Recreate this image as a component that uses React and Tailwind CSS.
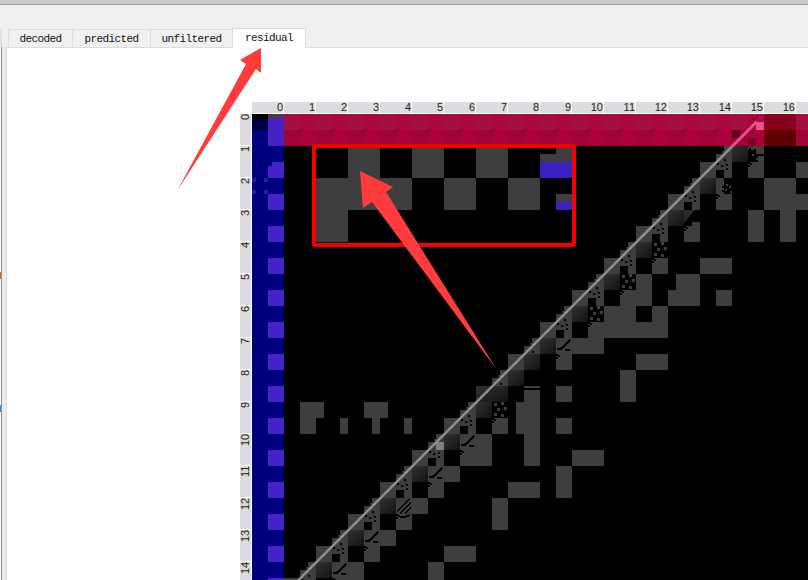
const columns = Array.from({ length: 18 }, (_, i) => i);
const rows = Array.from({ length: 15 }, (_, i) => i);
const GRAY = '#3e3e3e';
const VIOLET = '#4621c6';

// rects in page coordinates, the svg viewBox starts at the grid origin
const grayBlocks = [
    [348, 146, 32, 32], [412, 146, 32, 32], [476, 146, 32, 32], [556, 146, 16, 8], [540, 154, 32, 8],
    [316, 178, 96, 32], [444, 178, 32, 32], [508, 178, 32, 32], [556, 194, 16, 8], [316, 210, 32, 32],
    [764, 178, 32, 32], [796, 194, 12, 16], [796, 162, 12, 16], [748, 210, 16, 32], [780, 210, 16, 32],
    [700, 258, 32, 16], [716, 290, 16, 16], [676, 274, 24, 16], [668, 290, 32, 16],
    [636, 274, 16, 32], [604, 306, 32, 32], [652, 306, 16, 32], [588, 322, 64, 16], [572, 338, 32, 16],
    [636, 354, 32, 16], [620, 370, 16, 32], [556, 386, 16, 16], [556, 418, 16, 16], [572, 450, 32, 16],
    [556, 466, 16, 32], [524, 390, 16, 76], [516, 402, 8, 32], [476, 434, 16, 32], [508, 482, 32, 16],
    [492, 498, 16, 32], [300, 402, 24, 16], [300, 418, 16, 16], [340, 418, 8, 16], [364, 402, 24, 16],
    [372, 418, 8, 16], [404, 418, 8, 16], [444, 466, 16, 16], [412, 498, 16, 16], [380, 530, 16, 16],
    [348, 562, 16, 18], [444, 546, 32, 16], [428, 562, 16, 18], [524, 386, 16, 2],
];

const rightCells = [
    { x: 732, y: 146, kind: 'speck' }, { x: 700, y: 178, kind: 'half' }, { x: 668, y: 210, kind: 'tri' },
    { x: 636, y: 242, kind: 'dots' }, { x: 604, y: 274, kind: 'dots' }, { x: 572, y: 306, kind: 'dots' },
    { x: 540, y: 338, kind: 'stroke' }, { x: 508, y: 370, kind: 'none' }, { x: 476, y: 402, kind: 'dots' },
    { x: 444, y: 434, kind: 'stroke' }, { x: 412, y: 466, kind: 'stroke' }, { x: 380, y: 498, kind: 'stripes' },
    { x: 348, y: 530, kind: 'stroke' }, { x: 316, y: 562, kind: 'stroke' },
];

function Dots({ items, fill = '#000', size = 2 }) {
    return items.map(([x, y], i) => <rect key={i} x={x} y={y} width={size} height={size} fill={fill} />);
}

function DiagonalCell({ x, y }) {
    return (
        <g>
            <path d={`M${x + 24} ${y}h8v16h-16v-8h8z`} fill={GRAY} />
            <rect x={x} y={y + 16} width="16" height="16" fill={GRAY} />
            <rect x={x + 16} y={y + 16} width="16" height="16" fill={GRAY} />
            <rect x={x + 16} y={y + 24} width="8" height="8" fill="#000" />
            <Dots items={[[x + 17, y + 17], [x + 21, y + 19], [x + 26, y + 18], [x + 26, y + 22], [x + 24, y + 13]]} />
            <Dots fill={GRAY} items={[[x + 16, y + 8], [x + 20, y + 10], [x + 22, y + 5]]} />
        </g>
    );
}

function RightCell({ x, y, kind }) {
    const tr = x + 16;
    return (
        <g>
            <rect x={x} y={y} width="16" height="16" fill="url(#dark)" />
            {kind === 'speck' && (
                <g>
                    <rect x={tr + 8} y={y} width="8" height="8" fill={GRAY} />
                    <rect x={tr} y={y} width="8" height="4" fill={GRAY} />
                    <rect x={tr + 10} y={y + 10} width="6" height="6" fill={GRAY} />
                    <Dots items={[[tr + 1, y + 2], [tr + 6, y + 3]]} />
                    <Dots fill={GRAY} items={[[tr + 4, y + 8], [tr + 8, y + 12]]} />
                </g>
            )}
            {kind === 'half' && (
                <g>
                    <rect x={tr} y={y} width="8" height="16" fill={GRAY} />
                    <Dots fill={GRAY} items={[[tr + 10, y + 6], [tr + 13, y + 8], [tr + 9, y + 11], [tr + 14, y + 13]]} />
                    <Dots items={[[tr + 6, y + 12], [tr + 6, y + 8]]} />
                </g>
            )}
            {kind === 'tri' && (
                <g>
                    <path d={`M${tr} ${y}h11L${tr} ${y + 13}z`} fill="#2a2a2a" shapeRendering="auto" />
                    <rect x={tr + 8} y={y + 12} width="8" height="4" fill={GRAY} />
                </g>
            )}
            {kind === 'dots' && (
                <Dots fill={GRAY} size={3} items={[[tr + 2, y + 1], [tr + 9, y], [tr + 12, y + 5], [tr + 5, y + 6], [tr + 2, y + 11], [tr + 9, y + 12]]} />
            )}
            {kind === 'stroke' && (
                <g>
                    <rect x={tr} y={y} width="16" height="16" fill={GRAY} />
                    <path d={`M${tr + 14} ${y + 2}L${tr + 5} ${y + 11}H${tr + 1}M${tr + 14} ${y + 12}H${tr + 9}`} stroke="#000" strokeWidth="2" fill="none" />
                </g>
            )}
            {kind === 'stripes' && (
                <g>
                    <rect x={tr} y={y} width="16" height="16" fill={GRAY} />
                    <path d={`M${tr + 14} ${y + 1}L${tr + 1} ${y + 13}M${tr + 15} ${y + 5}L${tr + 4} ${y + 15}M${tr + 15} ${y + 10}L${tr + 9} ${y + 15}`} stroke="#000" strokeWidth="1.5" fill="none" />
                </g>
            )}
            {kind !== 'none' && (
                <g>
                    <rect x={tr} y={y + 16} width="16" height="16" fill={GRAY} />
                    <Dots items={[[tr, y + 16], [tr + 2, y + 17], [tr, y + 19]]} />
                </g>
            )}
            {kind === 'stripes' && <path d={`M${tr + 1} ${y + 17}Q${tr + 7} ${y + 21} ${tr + 14} ${y + 17}`} stroke="#000" strokeWidth="2" fill="none" />}
            {kind === 'none' && <rect x={tr} y={y + 20} width="16" height="12" fill={GRAY} />}
        </g>
    );
}

function Matrix() {
    const redColumns = Array.from({ length: 17 }, (_, i) => 284 + i * 32);
    return (
        <svg className="block w-[556px] h-[466px]" viewBox="252 114 556 466" shapeRendering="crispEdges">
            <defs>
                <linearGradient id="dark" x1="0" y1="0" x2="1" y2="1">
                    <stop offset="0" stopColor="#333333" />
                    <stop offset="1" stopColor="#111111" />
                </linearGradient>
            </defs>
            <rect x="252" y="114" width="556" height="466" fill="#000" />

            {/* left two columns, dark blue and violet */}
            <rect x="252" y="114" width="32" height="466" fill="#00007c" />
            {rows.concat(15).map((r) => (
                r > 1 && <rect key={r} x="268" y={130 + r * 32} width="16" height="16" fill={VIOLET} />
            ))}
            <rect x="252" y="114" width="16" height="5" fill="#000" />
            <rect x="252" y="119" width="16" height="11" fill="#000040" />
            <rect x="268" y="114" width="16" height="4" fill="#4a3c3c" />
            <rect x="268" y="118" width="16" height="28" fill={VIOLET} />
            <rect x="272" y="162" width="12" height="4" fill={VIOLET} />
            <rect x="268" y="166" width="16" height="12" fill={VIOLET} />
            {[[252, 178], [264, 178], [252, 190], [264, 190]].map(([x, y]) => (
                <rect key={`${x}-${y}`} x={x} y={y} width="4" height="4" fill="#2a18a8" />
            ))}

            {/* first row, crimson */}
            {redColumns.map((x) => (
                <g key={x}>
                    <rect x={x} y="114" width="16" height="16" fill="#a50f40" />
                    <rect x={x + 16} y="114" width="16" height="16" fill="#ac0840" />
                    <rect x={x} y="130" width="16" height="16" fill="#a0033a" />
                    <rect x={x + 16} y="130" width="16" height="16" fill="#aa003c" />
                    <rect x={x + 16} y="130" width="2" height="2" fill="#400010" />
                </g>
            ))}
            <rect x="764" y="114" width="32" height="16" fill="#860020" />
            <rect x="764" y="130" width="32" height="16" fill="#600000" />
            <rect x="732" y="130" width="8" height="8" fill="#5a0010" />
            <rect x="748" y="138" width="8" height="8" fill="#780020" />
            <rect x="756" y="122" width="8" height="8" fill="#f0508a" />
            <Dots fill="#500018" items={[[756, 116], [753, 119], [752, 132], [756, 134]]} />

            {grayBlocks.map(([x, y, w, h]) => (
                <rect key={`${x}-${y}`} x={x} y={y} width={w} height={h} fill={GRAY} />
            ))}
            <rect x="540" y="162" width="32" height="16" fill="#3a20c0" />
            <rect x="556" y="202" width="16" height="8" fill="#3a20c0" />

            {rightCells.map((c) => (
                <g key={c.x}>
                    <DiagonalCell x={c.x - 32} y={c.y} />
                    <RightCell x={c.x} y={c.y} kind={c.kind} />
                </g>
            ))}
            <rect x="524" y="354" width="16" height="16" fill="url(#dark)" />
            <rect x="476" y="386" width="32" height="16" fill="url(#dark)" />
            <rect x="436" y="442" width="8" height="8" fill="#808080" />

            {/* diagonal */}
            <line x1="296" y1="582.5" x2="732" y2="146.5" stroke="#8e8e8e" strokeWidth="2.5" shapeRendering="auto" />
            <line x1="732" y1="146.5" x2="757" y2="121.5" stroke="#ee4e86" strokeWidth="3" shapeRendering="auto" />
        </svg>
    );
}

function Tab({ label, width, active }) {
    if (active) {
        return (
            <div className={`${width} h-[20px] -mb-px pb-[1px] z-10 flex items-center justify-center bg-white border-t border-l border-r border-[#dcdcdc] border-b-0 text-[#111]`}>
                {label}
            </div>
        );
    }
    return (
        <div className={`${width} h-[18px] pt-[2px] flex items-center justify-center bg-[#f0f0f0] border-t border-l border-[#dcdcdc] text-[#111]`}>
            {label}
        </div>
    );
}

export default function App() {
    return (
        <div className="relative w-[808px] h-[580px] overflow-hidden bg-[#f0f0f0] font-['Liberation_Mono',monospace]">
            <div className="h-[5px] bg-[#cbcbcb] border-b border-[#a0a0a0]" />

            {/* Tabs */}
            <div className="h-[42px] flex items-end text-[11px] tracking-[-0.6px]">
                <div className="w-[2px] h-[18px] mr-[6px] bg-[#e2e2e2]" />
                <Tab label="decoded" width="w-[64px]" />
                <Tab label="predicted" width="w-[78px]" />
                <Tab label="unfiltered" width="w-[82px]" />
                <Tab label="residual" width="w-[74px]" active />
            </div>

            <div className="flex h-[533px]">
                {/* Left rail */}
                <div className="w-px bg-white">
                    <div className="h-[7px] mt-[225px] bg-[#f25c05]" />
                    <div className="h-[7px] mt-[126px] bg-[#2c8cf0]" />
                </div>
                <div className="w-px bg-[#8e8e98]" />
                <div className="w-[5px] bg-[#ebebeb] border-r border-[#dcdcdc]" />

                {/* Panel */}
                <div className="flex-1 min-w-0 overflow-hidden bg-white border-t border-[#dcdcdc] pt-[54px] pl-[233px] font-['Liberation_Sans',sans-serif] text-[11px] leading-none text-[#222]">
                    <div className="flex gap-px ml-[12px] mb-px">
                        {columns.map((c) => (
                            <div key={c} className="w-[31px] h-[11px] shrink-0 bg-[#dcdce0] text-right">{c < 17 ? c : ''}</div>
                        ))}
                    </div>
                    <div className="flex gap-px">
                        <div className="flex flex-col gap-px">
                            {rows.map((r) => (
                                <div key={r} className="w-[11px] h-[31px] shrink-0 bg-[#dcdce0] [writing-mode:vertical-rl] rotate-180 text-right">{r}</div>
                            ))}
                        </div>
                        <Matrix />
                    </div>
                </div>
            </div>

            {/* Annotations */}
            <div className="absolute left-[312px] top-[144px] w-[264px] h-[103px] border-4 border-[#f50000] rounded-[3px]" />
            <svg className="absolute left-0 top-0 w-[808px] h-[580px]" viewBox="0 0 808 580">
                <polygon points="261,48 240,60 246,64 177,191 256,69 261,73" fill="#ff3c3c" />
                <polygon points="360,171 393,187 386,192 497,370 372,202 363,208" fill="#ff3c3c" />
            </svg>
        </div>
    );
}
